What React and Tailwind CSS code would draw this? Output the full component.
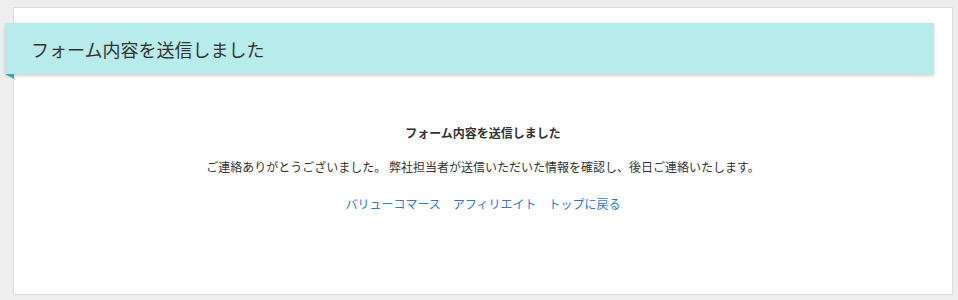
export default function App() {
  return (
    <div
      className="min-h-[300px] bg-[#eeeeee] pt-[7px] pl-[13px] pr-[5px] pb-[5px]"
      style={{ fontFamily: '"Noto Sans CJK JP", "Noto Sans", sans-serif' }}
    >
      <div className="h-[288px] w-[940px] border border-[#dddddd] bg-white">
        {/* header band */}
        <div className="relative mt-[15px] -ml-[9px] w-[929px]">
          <div className="flex h-[51px] items-center bg-[#b8ecea] pl-[26px] shadow-[0_2px_3px_rgba(0,0,0,0.18)]">
            <h1 className="text-[18px] font-normal leading-none text-[#333333]">
              フォーム内容を送信しました
            </h1>
          </div>
          <div className="absolute left-0 top-[51px] h-0 w-0 border-t-[5px] border-l-[9px] border-t-[#3aa8a0] border-l-transparent" />
        </div>

        <div className="flex flex-col items-center pt-[51px] text-[12px] text-[#333333]">
          <p className="font-bold leading-[16px]">フォーム内容を送信しました</p>
          <p className="mt-[18px] leading-[16px]">
            ご連絡ありがとうございました。 弊社担当者が送信いただいた情報を確認し、後日ご連絡いたします。
          </p>
          <div className="mt-[21px] flex gap-[12px] leading-[16px] text-[#3478c8]">
            <a href="#">バリューコマース</a>
            <a href="#">アフィリエイト</a>
            <a href="#">トップに戻る</a>
          </div>
        </div>
      </div>
    </div>
  )
}
